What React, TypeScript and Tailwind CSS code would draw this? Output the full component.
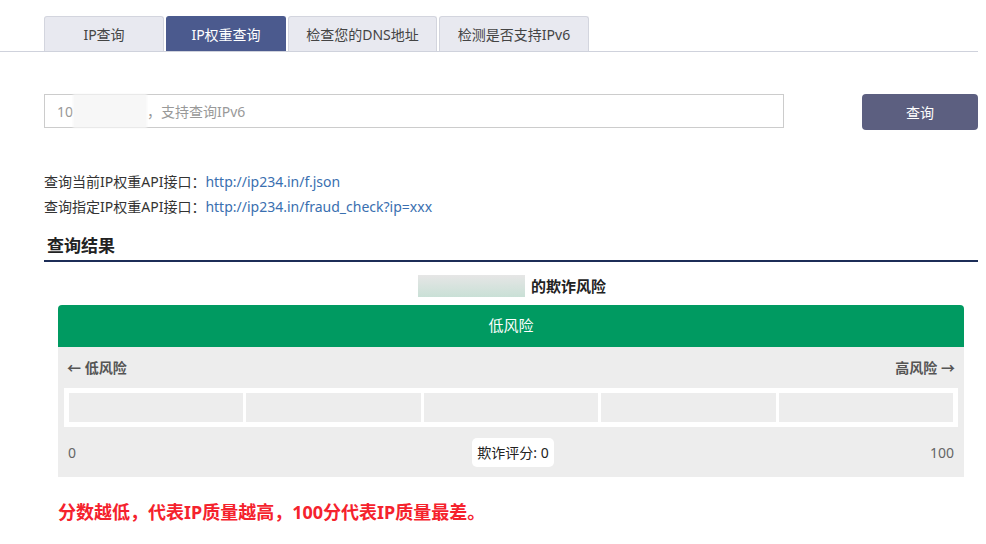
export default function App() {
  const tabs = ["IP查询", "IP权重查询", "检查您的DNS地址", "检测是否支持IPv6"]
  const tabWidths = ["w-[120px]", "w-[120px]", "w-[149px]", "w-[150px]"]

  return (
    <div
      className="w-[986px] h-[544px] bg-white text-[#333] overflow-hidden"
      style={{ fontFamily: '"Noto Sans", "Noto Sans CJK SC", sans-serif' }}
    >
      <div className="w-[978px] pt-[16px] pl-[44px] flex gap-[2px] border-b border-[#cfd2dc]">
        {tabs.map((t, i) => (
          <div
            key={t}
            className={`${tabWidths[i]} h-[35px] flex items-center justify-center text-[14px] rounded-t-[3px] border border-b-0 ${
              i === 1
                ? "bg-[#4b5a8e] border-[#4b5a8e] text-white"
                : "bg-[#e8e9f0] border-[#d3d5de] text-[#444]"
            }`}
          >
            {t}
          </div>
        ))}
      </div>

      <div className="pl-[44px] w-[978px]">
        {/* 搜索 */}
        <div className="mt-[42px] flex items-start justify-between">
          <div className="w-[740px] h-[34px] border border-[#ccc] flex items-center px-[12px] text-[14px] text-[#999]">
            <span>10</span>
            <span className="w-[74px] h-[34px] bg-[#f7f7f7] blur-[1px]" />
            <span>，支持查询IPv6</span>
          </div>
          <button className="w-[116px] h-[36px] rounded-[4px] bg-[#5c5f80] text-white text-[14px]">查询</button>
        </div>

        {/* API */}
        <div className="mt-[41px] text-[14px]">
          <p className="h-[25px] leading-[22px]">
            查询当前IP权重API接口：<span className="text-[#3a6fb0]">http://ip234.in/f.json</span>
          </p>
          <p className="h-[25px] leading-[22px]">
            查询指定IP权重API接口：<span className="text-[#3a6fb0]">http://ip234.in/fraud_check?ip=xxx</span>
          </p>
        </div>

        <h2 className="mt-[13px] pl-[3px] text-[17px] font-bold text-[#222] leading-[24px] pb-[2px] border-b-2 border-[#1c2d57]">
          查询结果
        </h2>

        {/* 结果 */}
        <div className="mt-[13px] flex justify-center items-center gap-[6px] pl-[2px]">
          <span className="w-[107px] h-[22px] bg-gradient-to-b from-[#e6e6e6] to-[#c9e0d6] blur-[0.5px]" />
          <span className="text-[15px] font-bold text-[#222]">的欺诈风险</span>
        </div>

        <div className="ml-[14px] mt-[7px] w-[906px]">
          <div className="h-[42px] bg-[#009a61] rounded-t-[4px] flex items-center justify-center text-white text-[15px]">
            低风险
          </div>
          <div className="bg-[#ededed] h-[130px] px-[6px] pt-[12px]">
            <div className="flex justify-between px-[3px] text-[14px] font-bold text-[#555] leading-[18px]">
              <span>← 低风险</span>
              <span>高风险 →</span>
            </div>
            <div className="mt-[11px] bg-white p-[5px] flex gap-[3px]">
              {[0, 1, 2, 3, 4].map((i) => (
                <div key={i} className="flex-1 h-[29px] bg-[#ededed]" />
              ))}
            </div>
            <div className="mt-[11px] flex items-center justify-between px-[4px] text-[14px] text-[#666]">
              <span>0</span>
              <span className="bg-white rounded-[5px] px-[5px] h-[29px] flex items-center text-[#222] ml-[20px]">
                欺诈评分: 0
              </span>
              <span>100</span>
            </div>
          </div>
        </div>

        <p className="ml-[14px] mt-[22px] text-[18px] font-bold text-[#f5222d]">
          分数越低，代表IP质量越高，100分代表IP质量最差。
        </p>
      </div>
    </div>
  )
}
